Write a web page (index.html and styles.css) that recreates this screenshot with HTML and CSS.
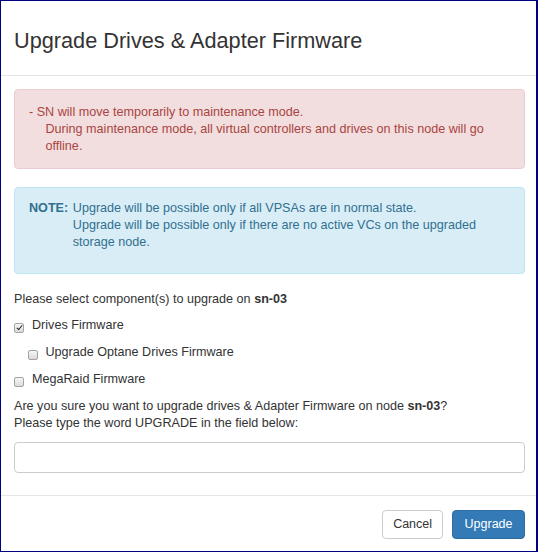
FILE: index.html
```html
<!DOCTYPE html>
<html lang="en">
<head>
<meta charset="utf-8">
<title>Upgrade Drives &amp; Adapter Firmware</title>
<link rel="stylesheet" href="styles.css">
</head>
<body>
<div class="modal">
  <div class="modal-header">
    <h4 class="modal-title">Upgrade Drives &amp; Adapter Firmware</h4>
  </div>
  <div class="modal-body">
    <div class="alert alert-danger">
      <div>- SN will move temporarily to maintenance mode.</div>
      <div class="indent">During maintenance mode, all virtual controllers and drives on this node will go<br>offline.</div>
    </div>
    <div class="alert alert-info">
      <strong class="note-label">NOTE:</strong>
      <div class="note-text">Upgrade will be possible only if all VPSAs are in normal state.<br>Upgrade will be possible only if there are no active VCs on the upgraded<br>storage node.</div>
    </div>
    <p class="prompt">Please select component(s) to upgrade on <b>sn-03</b></p>
    <label class="check"><input type="checkbox" checked><span>Drives Firmware</span></label>
    <label class="check sub"><input type="checkbox"><span>Upgrade Optane Drives Firmware</span></label>
    <label class="check"><input type="checkbox"><span>MegaRaid Firmware</span></label>
    <p class="confirm">Are you sure you want to upgrade drives &amp; Adapter Firmware on node <b>sn-03</b>?<br>Please type the word UPGRADE in the field below:</p>
    <input class="field" type="text" aria-label="Type UPGRADE">
  </div>
  <div class="modal-footer">
    <button class="btn btn-default" type="button">Cancel</button>
    <button class="btn btn-primary" type="button">Upgrade</button>
  </div>
</div>
</body>
</html>
```
FILE: styles.css
```css
html, body {
  margin: 0;
  padding: 0;
  background: #fff;
}

.modal {
  width: 538px;
  height: 552px;
  box-sizing: border-box;
  border-style: solid;
  border-color: #000080;
  border-width: 1px 2px 1px 1px;
  display: flex;
  flex-direction: column;
  background: #fff;
  font-family: "Liberation Sans", Arial, sans-serif;
  font-size: 12.6px;
  line-height: 17px;
  color: #333;
}

.modal-header {
  padding: 28px 11px 22px 13px;
  border-bottom: 1px solid #e5e5e5;
}

.modal-title {
  margin: 0;
  font-size: 21.7px;
  line-height: 24px;
  font-weight: normal;
  color: #333;
}

.modal-body {
  padding: 13px 11px 22px 13px;
  display: flex;
  flex-direction: column;
}

.alert {
  border: 1px solid transparent;
  border-radius: 4px;
  white-space: nowrap;
}

.alert-danger {
  padding: 14px 14px 13px;
  background: #f2dede;
  border-color: #ebccd1;
  color: #a94442;
}

.indent {
  padding-left: 16.5px;
}

.alert-info {
  margin-top: 18px;
  padding: 12px 14px 22px;
  background: #d9edf7;
  border-color: #bce8f1;
  color: #31708f;
  display: flex;
  align-items: flex-start;
}

.note-label {
  font-weight: bold;
}

.note-text {
  margin-left: 4.6px;
}

.prompt {
  margin: 17px 0 0;
}

.check {
  display: flex;
  align-items: flex-start;
  margin-top: 9px;
}

.check + .check {
  margin-top: 10px;
}

.check.sub {
  margin-left: 13.5px;
}

.check input {
  -webkit-appearance: none;
  appearance: none;
  position: relative;
  width: 10px;
  height: 10px;
  margin: 6px 8px 0 0;
  padding: 0;
  box-sizing: border-box;
  border: 1px solid #a3a3a3;
  border-radius: 2px;
  background: linear-gradient(#f6f6f6, #dadada);
  flex: none;
}

.check input:checked::after {
  content: "";
  position: absolute;
  left: 2.6px;
  top: 0.2px;
  width: 2.4px;
  height: 5px;
  border: solid #2b2b2b;
  border-width: 0 1.6px 1.6px 0;
  transform: rotate(40deg);
}

.confirm {
  margin: 10px 0 0;
}

.field {
  margin: 10px 0 0;
  width: 100%;
  height: 31px;
  box-sizing: border-box;
  border: 1px solid #ccc;
  border-radius: 4px;
  background: #fff;
  font: inherit;
  padding: 0 10px;
}

.modal-footer {
  border-top: 1px solid #e5e5e5;
  padding: 14px 11px 0 13px;
  display: flex;
  justify-content: flex-end;
  gap: 9px;
}

.btn {
  height: 29px;
  box-sizing: border-box;
  border: 1px solid transparent;
  border-radius: 4px;
  font-family: inherit;
  font-size: 12.5px;
  line-height: 17px;
  padding: 0 10px;
  cursor: pointer;
}

.btn-default {
  background: #fff;
  border-color: #ccc;
  color: #333;
}

.btn-primary {
  background: #337ab7;
  border-color: #2e6da4;
  color: #fff;
  padding: 0 11.5px;
}
```
